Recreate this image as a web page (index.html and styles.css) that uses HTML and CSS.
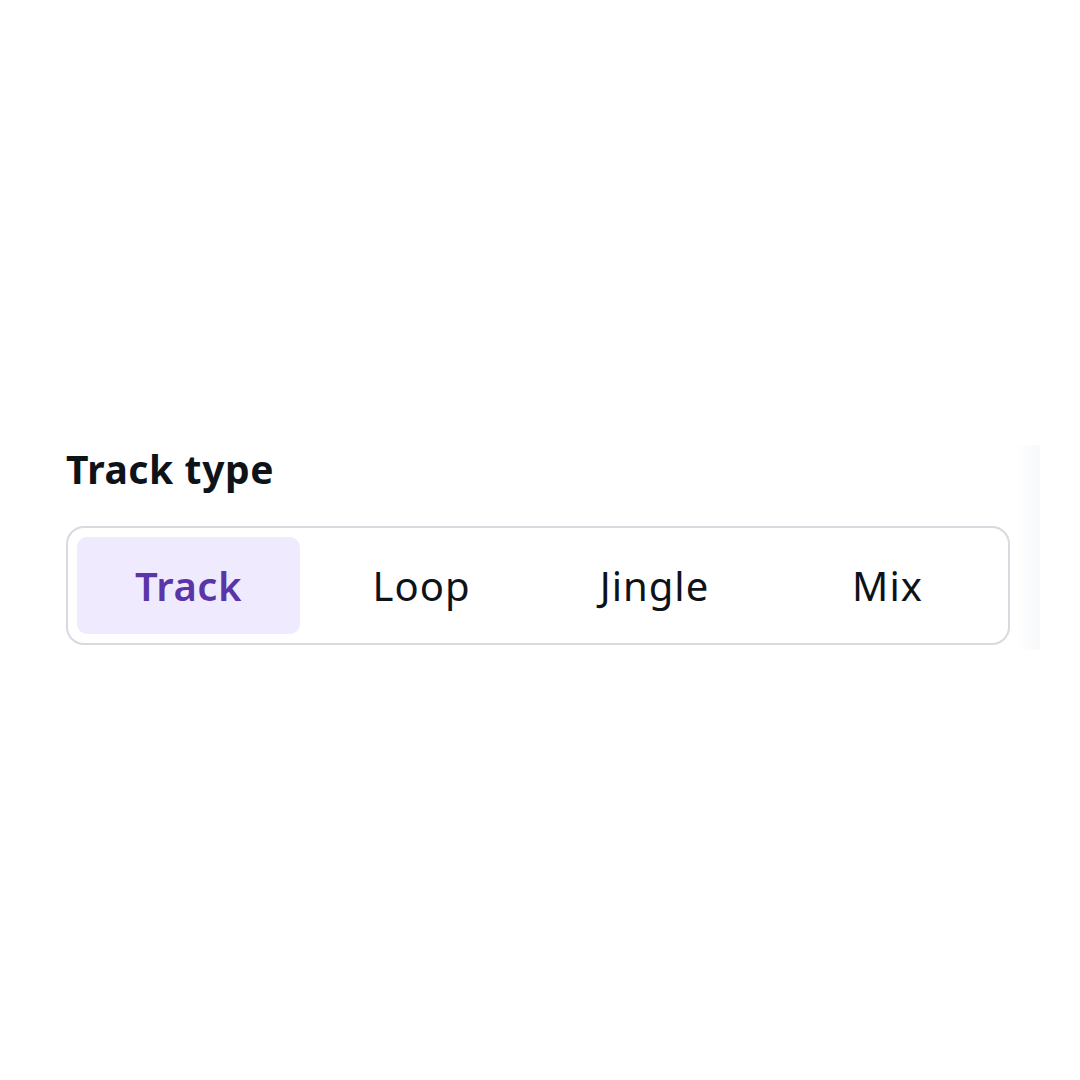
FILE: index.html
```html
<!DOCTYPE html>
<html lang="en">
<head>
<meta charset="utf-8">
<title>Track type</title>
<link rel="stylesheet" href="styles.css">
</head>
<body>
<div class="page">
  <section class="field">
    <h2 class="label">Track type</h2>
    <div class="segmented" role="radiogroup" aria-label="Track type">
      <button class="seg seg-active" role="radio" aria-checked="true">Track</button>
      <button class="seg" role="radio" aria-checked="false">Loop</button>
      <button class="seg" role="radio" aria-checked="false">Jingle</button>
      <button class="seg" role="radio" aria-checked="false">Mix</button>
    </div>
  </section>
  <div class="edge-shade"></div>
</div>
</body>
</html>
```
FILE: styles.css
```css
html, body {
  margin: 0;
  padding: 0;
  background: #ffffff;
}
body {
  font-family: "Noto Sans", "Open Sans", sans-serif;
  color: #0e1318;
}
.page {
  position: relative;
  width: 1080px;
  height: 1080px;
  box-sizing: border-box;
  padding: 443px 70px 0 66px;
}
.field {
  display: flex;
  flex-direction: column;
  gap: 31px;
}
.label {
  margin: 0;
  font-size: 39px;
  line-height: 52px;
  font-weight: 700;
  letter-spacing: 0.6px;
  color: #0e1318;
}
.segmented {
  display: grid;
  grid-template-columns: repeat(4, 1fr);
  gap: 10px;
  padding: 9px;
  border: 2px solid #d8dae0;
  border-radius: 18px;
  background: #ffffff;
}
.seg {
  height: 97px;
  border: none;
  border-radius: 10px;
  background: transparent;
  font-family: inherit;
  font-size: 40px;
  font-weight: 400;
  letter-spacing: 1px;
  color: #0e1318;
  padding: 0;
}
.seg-active {
  background: #efeafd;
  color: #5a35a8;
  font-weight: 600;
  letter-spacing: 0.5px;
}
.edge-shade {
  position: absolute;
  left: 1016px;
  top: 445px;
  width: 24px;
  height: 205px;
  background: linear-gradient(to right, rgba(246,247,250,0), rgba(246,247,250,0.8));
}
```
